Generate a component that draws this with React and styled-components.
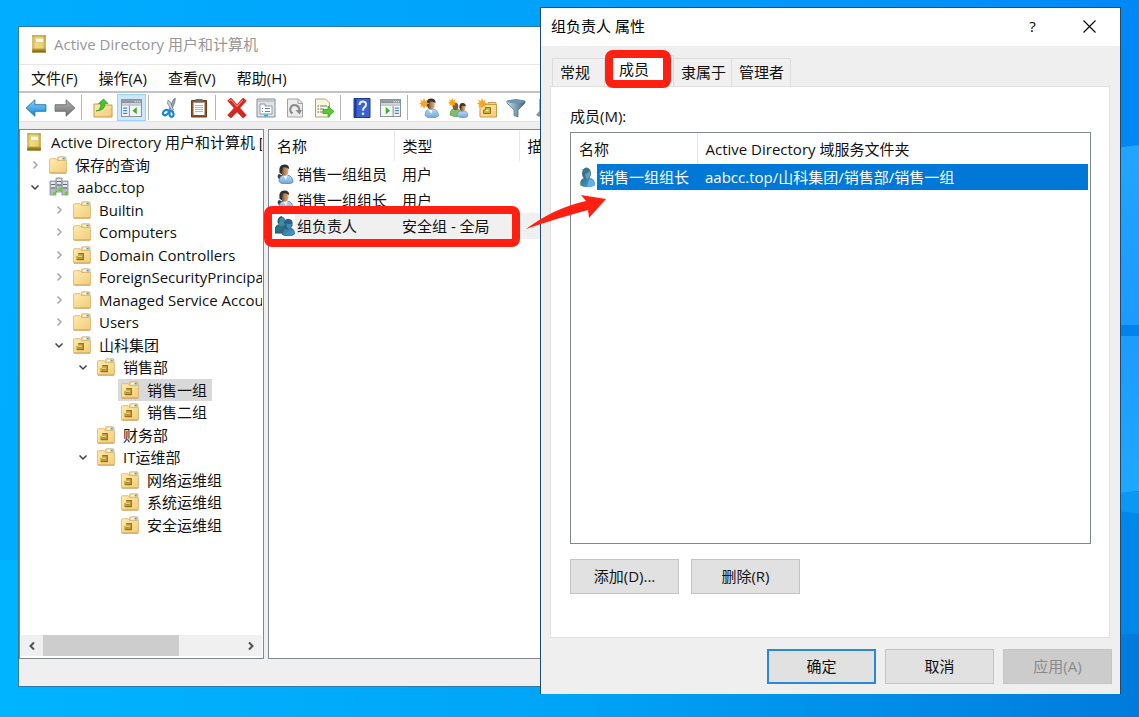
import { Fragment } from "react";
import styled, { createGlobalStyle } from "styled-components";

const GlobalStyle = createGlobalStyle`
  * {
    box-sizing: border-box;
  }
  body {
    margin: 0;
    font-family: "Open Sans", "Noto Sans CJK SC", sans-serif;
    font-size: 15px;
    line-height: 22px;
    color: #111;
  }
  button {
    font: inherit;
    color: inherit;
    cursor: pointer;
  }
  svg {
    display: block;
    flex: none;
  }
`;

const Desktop = styled.div`
  position: relative;
  height: 100vh;
  min-height: 600px;
  overflow: hidden;
  background: linear-gradient(95deg, #00adff 0%, #00a2fa 45%, #0086f5 100%);
`;

const Wallpaper = styled.svg`
  position: absolute;
  top: 0;
  right: 0;
  width: 100%;
  height: 100%;
`;

/* ---------- console window ---------- */

const ConsoleWindow = styled.section`
  position: absolute;
  top: 26px;
  left: 18px;
  right: 300px;
  bottom: 30px;
  display: flex;
  flex-direction: column;
  border: 1px solid #2d7ba6;
  background: #efefef;
`;

const ConsoleTitle = styled.header`
  display: flex;
  align-items: center;
  gap: 6px;
  height: 38px;
  padding: 0 0 3px 11px;
  background: #fff;
  border-bottom: 1px solid #e6e6e6;
  color: #979797;
`;

const MenuBar = styled.nav`
  display: flex;
  align-items: center;
  gap: 21px;
  height: 28px;
  padding: 0 0 1px 12px;
  background: #fff;
  border-bottom: 2px solid #c3c3c6;
`;

const MenuItem = styled.button`
  padding: 0;
  border: 0;
  background: none;
`;

const ToolBar = styled.div`
  display: flex;
  align-items: center;
  height: 29px;
  padding-left: 2px;
  background: #fff;
  border-bottom: 1px solid #e2e2e2;
  overflow: hidden;
`;

const ToolButton = styled.button`
  flex: none;
  display: flex;
  align-items: center;
  justify-content: center;
  width: 29px;
  height: 27px;
  padding: 1px 0 0;
  border: 1px solid ${(props) => (props.$active ? "#99d1ff" : "transparent")};
  background: ${(props) => (props.$active ? "#cce8ff" : "none")};
`;

const ToolSeparator = styled.span`
  flex: none;
  width: 7px;
  height: 25px;
  margin-left: 2px;
  border-left: 1px solid #b4b4b4;
`;

const Panes = styled.div`
  flex: 1;
  display: flex;
  gap: 4px;
  min-height: 0;
  padding-top: 7px;
`;

const TreePane = styled.div`
  flex: none;
  display: flex;
  flex-direction: column;
  width: 245px;
  padding: 1px 1px 2px;
  border: 1px solid #828790;
  background: #fff;
  overflow: hidden;
`;

const Tree = styled.ul`
  flex: 1;
  min-height: 0;
  margin: 0;
  padding: 0;
  list-style: none;
  overflow: hidden;
`;

const TreeRow = styled.li`
  display: flex;
  align-items: center;
  height: 22px;
  padding-left: ${(props) => props.$level * 24}px;
  white-space: nowrap;
  &:nth-child(even) {
    height: 23px;
  }
`;

const Twisty = styled.span`
  flex: none;
  display: flex;
  align-items: center;
  justify-content: center;
  width: 24px;
  padding-left: 3px;
`;

const TreeNode = styled.span`
  display: flex;
  align-items: center;
  gap: 8px;
  height: 22px;
  margin-left: 1px;
  padding: 0 5px 0 3px;
  background: ${(props) => (props.$selected ? "#d9d9d9" : "none")};
`;

const ScrollBar = styled.div`
  display: flex;
  align-items: stretch;
  height: 21px;
  background: #f0f0f0;
`;

const ScrollArrow = styled.button`
  display: flex;
  align-items: center;
  justify-content: center;
  width: 22px;
  padding: 0;
  border: 0;
  background: none;
`;

const ScrollTrack = styled.div`
  flex: 1;
`;

const ScrollThumb = styled.div`
  width: 69%;
  height: 100%;
  background: #cdcdcd;
`;

const ListPane = styled.div`
  flex: 1;
  min-width: 0;
  padding-top: 1px;
  border: 1px solid #828790;
  background: #fff;
  overflow: hidden;
`;

const StatusBar = styled.footer`
  height: 27px;
`;

/* ---------- list views ---------- */

const ListTable = styled.table`
  width: 100%;
  table-layout: fixed;
  border-collapse: collapse;
  white-space: nowrap;
  th,
  td {
    padding: 0 8px;
    font-weight: 400;
    text-align: left;
  }
  th {
    height: ${(props) => props.$head}px;
    border-right: 1px solid #e5e5e5;
  }
  th:last-child {
    border-right: 0;
  }
  td {
    height: 26px;
  }
`;

const NameCell = styled.div`
  display: flex;
  align-items: center;
  height: 26px;
  margin: 0 -8px;
  padding-left: 6px;
`;

const NameText = styled.span`
  flex: 1;
  height: 26px;
  padding-left: 2px;
  line-height: 26px;
`;

const ListRow = styled.tr`
  td + td,
  ${NameText} {
    background: ${(props) => props.$fill || "none"};
    color: ${(props) => (props.$light ? "#fff" : "inherit")};
  }
`;

/* ---------- properties dialog ---------- */

const Dialog = styled.section`
  position: absolute;
  top: 7px;
  left: 540px;
  right: 18px;
  bottom: 23px;
  display: flex;
  flex-direction: column;
  border: 1px solid #1d4a6e;
  border-bottom: 0;
  background: #efefef;
`;

const DialogTitle = styled.header`
  display: flex;
  align-items: center;
  height: 38px;
  padding: 0 2px 2px 10px;
  background: #fff;
  color: #000;
`;

const DialogName = styled.h1`
  flex: 1;
  margin: 0;
  font-size: 15px;
  font-weight: 400;
`;

const CaptionButton = styled.button`
  display: flex;
  align-items: center;
  justify-content: center;
  width: 57px;
  height: 36px;
  padding: 0;
  border: 0;
  background: none;
`;

const TabList = styled.div`
  display: flex;
  align-items: flex-end;
  height: 40px;
  padding-left: 11px;
`;

const Tab = styled.button`
  width: ${(props) => props.$width}px;
  height: ${(props) => (props.$active ? 31 : 28)}px;
  padding: ${(props) => (props.$active ? "0 0 5px 14px" : "0 0 2px 7px")};
  border: 1px solid #dcdcdc;
  border-left-width: ${(props) => (props.$first ? 1 : 0)}px;
  border-bottom: 0;
  background: ${(props) => (props.$active ? "#fff" : "#f0f0f0")};
  text-align: left;
  white-space: nowrap;
`;

const TabPanel = styled.div`
  flex: 1;
  display: flex;
  flex-direction: column;
  min-height: 0;
  margin: 0 10px 0 9px;
  padding: 18px 18px 43px 19px;
  border: 1px solid #e0e0e0;
  background: #fff;
`;

const FieldLabel = styled.span`
  height: 27px;
`;

const MemberBox = styled.div`
  flex: 1;
  min-height: 0;
  padding: 1px 2px 1px 0;
  border: 1px solid #828790;
`;

const ButtonRow = styled.div`
  display: flex;
  gap: ${(props) => props.$gap}px;
  justify-content: ${(props) => (props.$end ? "flex-end" : "flex-start")};
  padding: ${(props) => (props.$end ? "11px 8px 10px" : "15px 0 0")};
`;

const PushButton = styled.button`
  width: 109px;
  height: 35px;
  padding: 0 0 2px;
  border: ${(props) => (props.$primary ? "2px solid #2b88d8" : "1px solid #c4c4c4")};
  background: #e1e1e1;
  &:disabled {
    border-color: #c6c6c6;
    background: #cccccc;
    color: #8a8a8a;
  }
`;

/* ---------- red call-outs ---------- */

const Marker = styled.div`
  position: absolute;
  border: 8px solid #ff2012;
  border-radius: 8px;
  pointer-events: none;
`;

const TabMarker = styled(Marker)`
  top: 50px;
  left: 605px;
  width: 66px;
  height: 38px;
`;

const RowMarker = styled(Marker)`
  top: 206px;
  left: 264px;
  width: 256px;
  height: 41px;
`;

const Arrow = styled.svg`
  position: absolute;
  top: 190px;
  left: 520px;
`;

/* ---------- icons ---------- */

const Icon = ({ size = 20, children }) => (
  <svg width={size} height={size} viewBox="0 0 20 20" fill="none">
    {children}
  </svg>
);

const Gradients = () => (
  <svg width="0" height="0" style={{ position: "absolute" }}>
    <defs>
      <linearGradient id="folder" x1="0" y1="0" x2="1" y2="1">
        <stop offset="0" stopColor="#ffebb0" />
        <stop offset="1" stopColor="#f2cb78" />
      </linearGradient>
      <linearGradient id="book" x1="0" y1="0" x2="1" y2="0">
        <stop offset="0" stopColor="#c9a93f" />
        <stop offset="0.25" stopColor="#f0dd84" />
        <stop offset="0.8" stopColor="#e8d070" />
        <stop offset="1" stopColor="#b8962f" />
      </linearGradient>
      <linearGradient id="bookFoot" x1="0" y1="0" x2="0" y2="1">
        <stop offset="0" stopColor="#c3a13c" />
        <stop offset="1" stopColor="#7a5c0c" />
      </linearGradient>
      <linearGradient id="blueArrow" x1="0" y1="0" x2="0" y2="1">
        <stop offset="0" stopColor="#8fd6fb" />
        <stop offset="1" stopColor="#1183d6" />
      </linearGradient>
      <linearGradient id="greyArrow" x1="0" y1="0" x2="0" y2="1">
        <stop offset="0" stopColor="#b5b5b5" />
        <stop offset="1" stopColor="#6c6c6c" />
      </linearGradient>
      <linearGradient id="shirt" x1="0" y1="0" x2="0" y2="1">
        <stop offset="0" stopColor="#b9dcf6" />
        <stop offset="1" stopColor="#6fa5d8" />
      </linearGradient>
      <linearGradient id="face" x1="0" y1="0" x2="1" y2="0">
        <stop offset="0" stopColor="#4a3629" />
        <stop offset="0.45" stopColor="#a87a55" />
        <stop offset="1" stopColor="#e0b48a" />
      </linearGradient>
      <linearGradient id="teal" x1="0" y1="0" x2="1" y2="1">
        <stop offset="0" stopColor="#2c6f86" />
        <stop offset="1" stopColor="#4da2e2" />
      </linearGradient>
      <linearGradient id="funnel" x1="0" y1="0" x2="1" y2="0">
        <stop offset="0" stopColor="#c9dcea" />
        <stop offset="0.5" stopColor="#7d9fb8" />
        <stop offset="1" stopColor="#41657f" />
      </linearGradient>
    </defs>
  </svg>
);

const folderShape = (
  <>
    <path d="M9.500 5V2q0-1.200 1.200-1.200h7q1.200 0 1.200 1.200v6z" fill="#f5d78d" stroke="#cfae68" strokeWidth=".8" />
    <path d="M11.500 2.900h6" stroke="#fff" strokeWidth="1.800" />
    <path d="M15 2.900h2.500" stroke="#3b9be0" strokeWidth="1.800" />
    <path d="M.500 4q0-1 1-1h6.500l1.500 2h9q1 0 1 1v12q0 1-1 1h-17q-1 0-1-1z" fill="url(#folder)" stroke="#d9b469" strokeWidth=".9" />
    <path d="M1 19h18" stroke="#c59a4c" strokeWidth="1" />
  </>
);

const FolderIcon = () => <Icon size={18}>{folderShape}</Icon>;

const OuIcon = () => (
  <Icon size={18}>
    {folderShape}
    <path d="M5.500 8h6v7.500h-8V11h2z" fill="#d0a935" />
    <path d="M6 8.500h5.500V15h-7" stroke="#96751c" strokeWidth="1.400" />
    <path d="M5.500 11h4v2h-4z" fill="#fff0b0" />
    <path d="M5.500 12.500h4" stroke="#7c6c3b" />
  </Icon>
);

const BookIcon = () => (
  <Icon size={18}>
    <path d="M2.500.500h15v19h-15z" fill="url(#book)" />
    <path d="M2.500 1h15" stroke="#a5822a" />
    <path d="M6 3.500h9v5H6z" fill="#fffbe4" stroke="#d8bf5c" strokeWidth=".8" />
    <path d="M2.500 15h15v4.500h-15z" fill="url(#bookFoot)" />
  </Icon>
);

const DomainIcon = () => (
  <Icon size={20}>
    {[
      [7, 1],
      [1, 4],
      [13, 4],
    ].map(([x, y]) => (
      <g key={x}>
        <path d={`M${x} ${y}h6v14h-6z`} fill="#b3bac2" stroke="#87919b" strokeWidth=".8" />
        <path d={`M${x + 1} ${y + 2}h4M${x + 1} ${y + 5}h4`} stroke="#f5f8fa" strokeWidth="1.400" />
        <path d={`M${x + 1} ${y + 3.500}h4M${x + 1} ${y + 7}h4`} stroke="#5f6b75" />
      </g>
    ))}
    <path d="M4 15h3v3H4zM16 15h3v3h-3zM9.500 11h3v3h-3z" fill="#66d321" />
  </Icon>
);

const UserIcon = () => (
  <Icon>
    <path d="M4 10q-2 1-1 4l4 3 2-5z" fill="#33434a" />
    <path d="M4 17q0-5 5-6h3q6 1 6 7-2 2-7 2-6 0-7-3z" fill="url(#shirt)" stroke="#5480a8" strokeWidth=".8" />
    <path d="M8 11l3 5 1.500-5z" fill="#f4f8fb" />
    <ellipse cx="9.500" cy="6.500" rx="4" ry="5.300" fill="url(#face)" />
    <path d="M4.500 9Q3 .500 9.500.500 14.500.500 14 5 11 2.800 8 3.500 7 6 7 10z" fill="#33302c" />
  </Icon>
);

const GroupIcon = () => (
  <Icon size={20}>
    <path d="M0 15q0-6 4-6h4q4 0 4 6v2H0z" fill="#286f7f" stroke="#1d4f6b" />
    <ellipse cx="6.500" cy="5.500" rx="4" ry="5" fill="#3c8d9c" />
    <path d="M3.500 7Q3 1 7 1" stroke="#23586a" strokeWidth="1.400" />
    <path d="M7 18q0-6 4.500-6h3q5 0 5 6-2 2-6.500 2T7 18z" fill="url(#teal)" stroke="#1f5a92" strokeWidth=".8" />
    <path d="M9 5q4-4 8-.500 1 2 .500 5-2 4-4.500 4T9.500 10z" fill="#2b608b" />
    <path d="M11.500 7.500q3 1 5 0v2.500q-1 3-3 3-2-1-2-5.500z" fill="#4286bd" />
  </Icon>
);

const MemberIcon = () => (
  <Icon>
    <path d="M3 18q0-7 5-7h4q6 0 6 7-2 2-7.500 2T3 18z" fill="url(#teal)" />
    <path d="M12 12q5 0 6 6-3 2-8 2z" fill="#5fb0ee" />
    <ellipse cx="9.500" cy="6.500" rx="4.500" ry="6" fill="#37748d" />
    <path d="M8 7q4-1 4-4 2 3 1 6l-3 4z" fill="#6a9fbb" />
    <path d="M3 16l1 3M5 3l1-1" stroke="#8ecf3f" />
  </Icon>
);

const star = (
  <path d="M5 0l1.200 3L9 1.500 7.500 4.300 10.500 5.500l-3 1.200L9 9.500 6.200 8 5 11 3.800 8 1 9.500l1.500-2.800L0 5.500l2.500-1.200L1 1.500 3.800 3z" fill="#f8a51b" />
);

const BackIcon = () => (
  <Icon size={22}>
    <path d="M1 10l8-7.500v4.500h10v6H9v4.500z" fill="url(#blueArrow)" stroke="#2370a8" strokeWidth=".8" />
  </Icon>
);

const ForwardIcon = () => (
  <Icon size={22}>
    <path d="M19 10l-8-7.500v4.500H1v6h10v4.500z" fill="url(#greyArrow)" stroke="#6d6d6d" strokeWidth=".8" />
  </Icon>
);

const UpFolderIcon = () => (
  <Icon>
    <path d="M1 6h6l1 1h11v12H1z" fill="url(#folder)" stroke="#c69b49" />
    <path d="M3 13q5-1 5-7.500H5.500L10.500 1 15 5.500h-3q0 7.500-9 7.500z" fill="#3fc72c" stroke="#24901a" strokeWidth=".6" />
  </Icon>
);

const PanelIcon = ({ right }) => (
  <Icon size={21}>
    <path d="M.500 2.500h19v16H.500z" fill="#f4f6f8" stroke="#8a9299" />
    <path d="M1 3h18v3H1z" fill="#8e979f" />
    <path d="M13 4.500h1M15 4.500h1M17 4.500h1" stroke="#fff" />
    <path d="M1 7.500h18" stroke="#c4cbd1" strokeWidth="2" />
    {right ? (
      <>
        <path d="M12.500 8v10" stroke="#8a9299" />
        <path d="M14 10.500h4M14 13h4M14 15.500h4" stroke="#4a86cf" strokeWidth="1.200" />
        <path d="M5.500 9.500L9.500 13l-4 3.500z" fill="#35b324" />
      </>
    ) : (
      <>
        <path d="M8 8v10" stroke="#8a9299" />
        <path d="M2 10.500h4M2 13h4M2 15.500h4" stroke="#4a86cf" strokeWidth="1.200" />
        <path d="M15 9.500L11 13l4 3.500z" fill="#35b324" />
      </>
    )}
  </Icon>
);

const CutIcon = () => (
  <Icon>
    <path d="M8.500 12.500L13.500 1l2-.500-1 5-4 8z" fill="#8f9fb0" stroke="#5b6e80" strokeWidth=".6" />
    <path d="M12 13L7.500 5.500 8 2l2 1.500 3.500 8.500z" fill="#c4d0da" stroke="#5b6e80" strokeWidth=".6" />
    <ellipse cx="5.800" cy="14.500" rx="2.200" ry="3.200" stroke="#1e86d6" strokeWidth="2.200" transform="rotate(55 5.800 14.500)" />
    <ellipse cx="11.500" cy="16" rx="2" ry="2.800" stroke="#1e86d6" strokeWidth="2.200" transform="rotate(-10 11.500 16)" />
  </Icon>
);

const PasteIcon = () => (
  <Icon>
    <path d="M2.500 2.500h15v16.500h-15z" fill="#8e5628" stroke="#6b3c17" />
    <path d="M4.500 4.500h11V17h-11z" fill="#fff" />
    <path d="M6.500 1h7v3.500h-7z" fill="#676d72" />
    <path d="M6 7.500h8M6 9.500h8M6 11.500h8M6 13.500h8" stroke="#a7b8c8" />
  </Icon>
);

const DeleteIcon = () => (
  <Icon size={22}>
    <path d="M1.500 3.500l3-2.500 5.500 6 5.500-6 3 2.500-6 6.500 6 6.500-3 2.500-5.500-5.500L4.500 19l-3-2.500 6-6.500z" fill="#dd231d" stroke="#b51512" strokeWidth=".6" />
    <path d="M3 3.500l1.500-1 5.500 6 5.500-6" stroke="#f4867a" strokeWidth="1" />
  </Icon>
);

const PropertiesIcon = () => (
  <Icon>
    <path d="M1 1h18v18H1z" fill="#dfe3e7" stroke="#848c94" />
    <path d="M2 3h16" stroke="#a3abb3" />
    <path d="M4 6h5v2h7v8H4z" fill="#fff" stroke="#8d99a5" />
    <path d="M6 10.500h1M9 10.500h5M6 13.500h1M9 13.500h5" stroke="#5d83ad" />
    <path d="M8 17.500h4" stroke="#1fb4f0" strokeWidth="2" />
  </Icon>
);

const RefreshIcon = () => (
  <Icon>
    <path d="M2.500 1h11l4 4v14h-15z" fill="#ececec" stroke="#a3a3a3" />
    <path d="M13 1v4.500h4.500" stroke="#a3a3a3" />
    <path d="M7.500 15.500a4.500 4.500 0 1 1 6.500-2.500" stroke="#8a8a8a" strokeWidth="2.200" />
    <path d="M10.500 12h6.500l-2.500 4.500z" fill="#8a8a8a" />
  </Icon>
);

const ExportIcon = () => (
  <Icon>
    <path d="M1.500 1h10l4 4v14h-14z" fill="#fbf7dc" stroke="#aaa27c" />
    <path d="M3.500 8h1.500M3.500 11h1.500M3.500 14h1.500" stroke="#555" />
    <path d="M6 8h7M6 11h4M6 14h4" stroke="#777" />
    <path d="M9 11.500h5V8l6 5.500-6 5.500v-3.500H9z" fill="#55cc33" stroke="#2f9c1a" strokeWidth=".7" />
  </Icon>
);

const HelpIcon = () => (
  <Icon>
    <path d="M2 .500h16v19H2z" fill="#3c63d0" stroke="#1d3a93" />
    <path d="M3.500 1v18" stroke="#1d3a93" strokeWidth="2" />
    <path d="M7.500 7q0-3.500 3.300-3.500T14 6.500q0 2-1.800 3.200-1.200.800-1.200 3" stroke="#e8eefc" strokeWidth="2" />
    <circle cx="11" cy="15.800" r="1.300" fill="#e8eefc" />
  </Icon>
);

const NewUserIcon = () => (
  <Icon>
    <path d="M6 17q0-5 4-6h4q5.500 1 5.500 7-2 2-6.500 2-6 0-7-3z" fill="url(#shirt)" stroke="#5d86ab" strokeWidth=".6" />
    <path d="M9 11l3.500 5 1-5z" fill="#f4f8fb" />
    <ellipse cx="12" cy="6.500" rx="3.800" ry="5.300" fill="url(#face)" />
    <path d="M7.500 8Q6.500.500 12 .500q5 0 4.500 4.500-3-2-5.500-1.500-1.500 2-1.500 6z" fill="#3d332c" />
    {star}
  </Icon>
);

const NewGroupIcon = () => (
  <Icon>
    <path d="M2 17q0-6 4-6h3q4 0 4 6l-5 2z" fill="#7fbf6c" stroke="#4f8a48" strokeWidth=".6" />
    <ellipse cx="7.500" cy="8.500" rx="2.800" ry="3.800" fill="#7b5d42" />
    <path d="M9 18q0-5 4-5h3q4 0 4 5-2 2-5 2T9 18z" fill="url(#shirt)" stroke="#5d86ab" strokeWidth=".6" />
    <ellipse cx="14.500" cy="9.500" rx="2.800" ry="4" fill="url(#face)" />
    <path d="M11.500 10q-.500-5 3-5t3.200 3.500q-2-1.200-4-.500l-.700 3z" fill="#443228" />
    <g transform="scale(.85)">{star}</g>
  </Icon>
);

const NewOuIcon = () => (
  <Icon>
    <path d="M11 6V4.500h8V8z" fill="#f5d583" stroke="#c9a254" />
    <path d="M3 6.500h16.500V19H3z" fill="url(#folder)" stroke="#c69b49" />
    <path d="M8.500 9.500h5v6h-7V12h2z" fill="#d4ab32" stroke="#8f6f17" />
    <path d="M8.500 12.500h3" stroke="#fff2b5" strokeWidth="1.400" />
    {star}
  </Icon>
);

const FilterIcon = () => (
  <Icon>
    <path d="M1 3q9-3 18 0v2l-7 7v7l-4-1.500V12L1 5z" fill="url(#funnel)" stroke="#4d6c82" strokeWidth=".7" />
    <ellipse cx="10" cy="3.500" rx="8.500" ry="1.800" fill="#6f95b0" />
  </Icon>
);

const SearchIcon = () => (
  <Icon>
    <path d="M4 1h12v17H4z" fill="url(#book)" />
    <path d="M1 17l5-6 3 3-5 5z" fill="#8b9197" />
  </Icon>
);

const Chevron = ({ open }) => (
  <svg width="10" height="10" viewBox="0 0 10 10" fill="none">
    <path
      d={open ? "M1.500 3.500L5 7l3.500-3.500" : "M3.500 1.500L7 5 3.500 8.500"}
      stroke={open ? "#404040" : "#a6a6a6"}
      strokeWidth="1.500"
    />
  </svg>
);

/* ---------- data ---------- */

const menus = ["文件(F)", "操作(A)", "查看(V)", "帮助(H)"];

const tools = [
  [
    { name: "后退", icon: <BackIcon /> },
    { name: "前进", icon: <ForwardIcon /> },
  ],
  [
    { name: "上一级", icon: <UpFolderIcon /> },
    { name: "控制台树", icon: <PanelIcon />, active: true },
  ],
  [
    { name: "剪切", icon: <CutIcon /> },
    { name: "粘贴", icon: <PasteIcon /> },
  ],
  [
    { name: "删除", icon: <DeleteIcon /> },
    { name: "属性", icon: <PropertiesIcon /> },
    { name: "刷新", icon: <RefreshIcon /> },
    { name: "导出列表", icon: <ExportIcon /> },
  ],
  [
    { name: "帮助", icon: <HelpIcon /> },
    { name: "操作窗格", icon: <PanelIcon right /> },
  ],
  [
    { name: "新建用户", icon: <NewUserIcon /> },
    { name: "新建组", icon: <NewGroupIcon /> },
    { name: "新建组织单位", icon: <NewOuIcon /> },
    { name: "筛选器", icon: <FilterIcon /> },
    { name: "查找", icon: <SearchIcon /> },
  ],
];

const tree = [
  { level: 0, label: "Active Directory 用户和计算机 [", icon: <BookIcon />, root: true },
  { level: 0, label: "保存的查询", icon: <FolderIcon />, twisty: "closed" },
  { level: 0, label: "aabcc.top", icon: <DomainIcon />, twisty: "open" },
  { level: 1, label: "Builtin", icon: <FolderIcon />, twisty: "closed" },
  { level: 1, label: "Computers", icon: <FolderIcon />, twisty: "closed" },
  { level: 1, label: "Domain Controllers", icon: <OuIcon />, twisty: "closed" },
  { level: 1, label: "ForeignSecurityPrincipal", icon: <FolderIcon />, twisty: "closed" },
  { level: 1, label: "Managed Service Accou", icon: <FolderIcon />, twisty: "closed" },
  { level: 1, label: "Users", icon: <FolderIcon />, twisty: "closed" },
  { level: 1, label: "山科集团", icon: <OuIcon />, twisty: "open" },
  { level: 2, label: "销售部", icon: <OuIcon />, twisty: "open" },
  { level: 3, label: "销售一组", icon: <OuIcon />, selected: true },
  { level: 3, label: "销售二组", icon: <OuIcon /> },
  { level: 2, label: "财务部", icon: <OuIcon /> },
  { level: 2, label: "IT运维部", icon: <OuIcon />, twisty: "open" },
  { level: 3, label: "网络运维组", icon: <OuIcon /> },
  { level: 3, label: "系统运维组", icon: <OuIcon /> },
  { level: 3, label: "安全运维组", icon: <OuIcon /> },
];

const objects = [
  { name: "销售一组组员", type: "用户", icon: <UserIcon /> },
  { name: "销售一组组长", type: "用户", icon: <UserIcon /> },
  { name: "组负责人", type: "安全组 - 全局", icon: <GroupIcon />, selected: true },
];

const tabs = [
  { label: "常规", width: 53 },
  { label: "成员", width: 69, active: true },
  { label: "隶属于", width: 58 },
  { label: "管理者", width: 59 },
];

/* ---------- parts ---------- */

const Console = () => (
  <ConsoleWindow>
    <ConsoleTitle>
      <BookIcon />
      Active Directory 用户和计算机
    </ConsoleTitle>
    <MenuBar>
      {menus.map((menu) => (
        <MenuItem key={menu}>{menu}</MenuItem>
      ))}
    </MenuBar>
    <ToolBar>
      {tools.map((group, index) => (
        <Fragment key={index}>
          {index > 0 && <ToolSeparator />}
          {group.map((tool) => (
            <ToolButton key={tool.name} aria-label={tool.name} $active={tool.active}>
              {tool.icon}
            </ToolButton>
          ))}
        </Fragment>
      ))}
    </ToolBar>
    <Panes>
      <TreePane>
        <Tree>
          {tree.map((node) => (
            <TreeRow key={node.label} $level={node.level}>
              {!node.root && (
                <Twisty>
                  {node.twisty && <Chevron open={node.twisty === "open"} />}
                </Twisty>
              )}
              <TreeNode $selected={node.selected}>
                {node.icon}
                {node.label}
              </TreeNode>
            </TreeRow>
          ))}
        </Tree>
        <ScrollBar>
          <ScrollArrow aria-label="向左滚动">
            <svg width="8" height="10" viewBox="0 0 8 10" fill="none">
              <path d="M6 1.500L2.500 5 6 8.500" stroke="#505050" strokeWidth="2" />
            </svg>
          </ScrollArrow>
          <ScrollTrack>
            <ScrollThumb />
          </ScrollTrack>
          <ScrollArrow aria-label="向右滚动">
            <svg width="8" height="10" viewBox="0 0 8 10" fill="none">
              <path d="M2 1.500L5.500 5 2 8.500" stroke="#505050" strokeWidth="2" />
            </svg>
          </ScrollArrow>
        </ScrollBar>
      </TreePane>
      <ListPane>
        <ListTable $head={30}>
          <colgroup>
            <col style={{ width: 125 }} />
            <col style={{ width: 125 }} />
            <col />
          </colgroup>
          <thead>
            <tr>
              <th>名称</th>
              <th>类型</th>
              <th>描述</th>
            </tr>
          </thead>
          <tbody>
            {objects.map((item) => (
              <ListRow key={item.name} $fill={item.selected && "#f0f0f0"}>
                <td>
                  <NameCell>
                    {item.icon}
                    <NameText>{item.name}</NameText>
                  </NameCell>
                </td>
                <td>{item.type}</td>
                <td />
              </ListRow>
            ))}
          </tbody>
        </ListTable>
      </ListPane>
    </Panes>
    <StatusBar />
  </ConsoleWindow>
);

const PropertiesDialog = () => (
  <Dialog role="dialog" aria-labelledby="dialog-name">
    <DialogTitle>
      <DialogName id="dialog-name">组负责人 属性</DialogName>
      <CaptionButton>?</CaptionButton>
      <CaptionButton aria-label="关闭">
        <svg width="13" height="13" viewBox="0 0 13 13" fill="none">
          <path d="M.500.500l12 12M12.500.500l-12 12" stroke="#000" strokeWidth="1.100" />
        </svg>
      </CaptionButton>
    </DialogTitle>
    <TabList role="tablist">
      {tabs.map((tab, index) => (
        <Tab
          key={tab.label}
          role="tab"
          aria-selected={!!tab.active}
          $active={tab.active}
          $first={index === 0}
          $width={tab.width}
        >
          {tab.label}
        </Tab>
      ))}
    </TabList>
    <TabPanel role="tabpanel">
      <FieldLabel id="members-label">成员(M):</FieldLabel>
      <MemberBox>
        <ListTable $head={30} aria-labelledby="members-label">
          <colgroup>
            <col style={{ width: 126 }} />
            <col />
          </colgroup>
          <thead>
            <tr>
              <th>名称</th>
              <th>Active Directory 域服务文件夹</th>
            </tr>
          </thead>
          <tbody>
            <ListRow $fill="#0078d7" $light>
              <td>
                <NameCell>
                  <MemberIcon />
                  <NameText>销售一组组长</NameText>
                </NameCell>
              </td>
              <td>aabcc.top/山科集团/销售部/销售一组</td>
            </ListRow>
          </tbody>
        </ListTable>
      </MemberBox>
      <ButtonRow $gap={12}>
        <PushButton>添加(D)...</PushButton>
        <PushButton>删除(R)</PushButton>
      </ButtonRow>
    </TabPanel>
    <ButtonRow $gap={9} $end>
      <PushButton $primary>确定</PushButton>
      <PushButton>取消</PushButton>
      <PushButton disabled>应用(A)</PushButton>
    </ButtonRow>
  </Dialog>
);

export default function App() {
  return (
    <>
      <GlobalStyle />
      <Gradients />
      <Desktop>
        <Wallpaper viewBox="0 0 1139 717" preserveAspectRatio="none">
          <defs>
            <linearGradient id="floor" x1="0" y1="0" x2="1" y2="0">
              <stop offset="0" stopColor="#00b4ff" />
              <stop offset="0.5" stopColor="#00a4f7" />
              <stop offset="1" stopColor="#007bdc" />
            </linearGradient>
            <linearGradient id="glow" x1="0" y1="0" x2="0" y2="1">
              <stop offset="0" stopColor="#22a5ff" />
              <stop offset="0.5" stopColor="#1c9aff" />
              <stop offset="1" stopColor="#1fa8ff" />
            </linearGradient>
          </defs>
          <path d="M0 560h1139v157H0z" fill="url(#floor)" />
          <path d="M1100 150l39-5v180h-39zM1100 336h39v155l-39 4z" fill="url(#glow)" />
          <path d="M1100 325h39v11h-39z" fill="#0083ee" />
          <path d="M1100 495l39-4v23l-39-5z" fill="#0a98f4" />
          <path d="M1100 509l39 5v120h-39z" fill="#0087ea" />
        </Wallpaper>
        <Console />
        <PropertiesDialog />
        <TabMarker />
        <RowMarker />
        <Arrow width="90" height="44" viewBox="0 0 90 44">
          <path d="M6 39Q34 18 66 11L61 5l25 4-17 19-1-8Q38 28 6 39z" fill="#ff2012" />
        </Arrow>
      </Desktop>
    </>
  );
}
